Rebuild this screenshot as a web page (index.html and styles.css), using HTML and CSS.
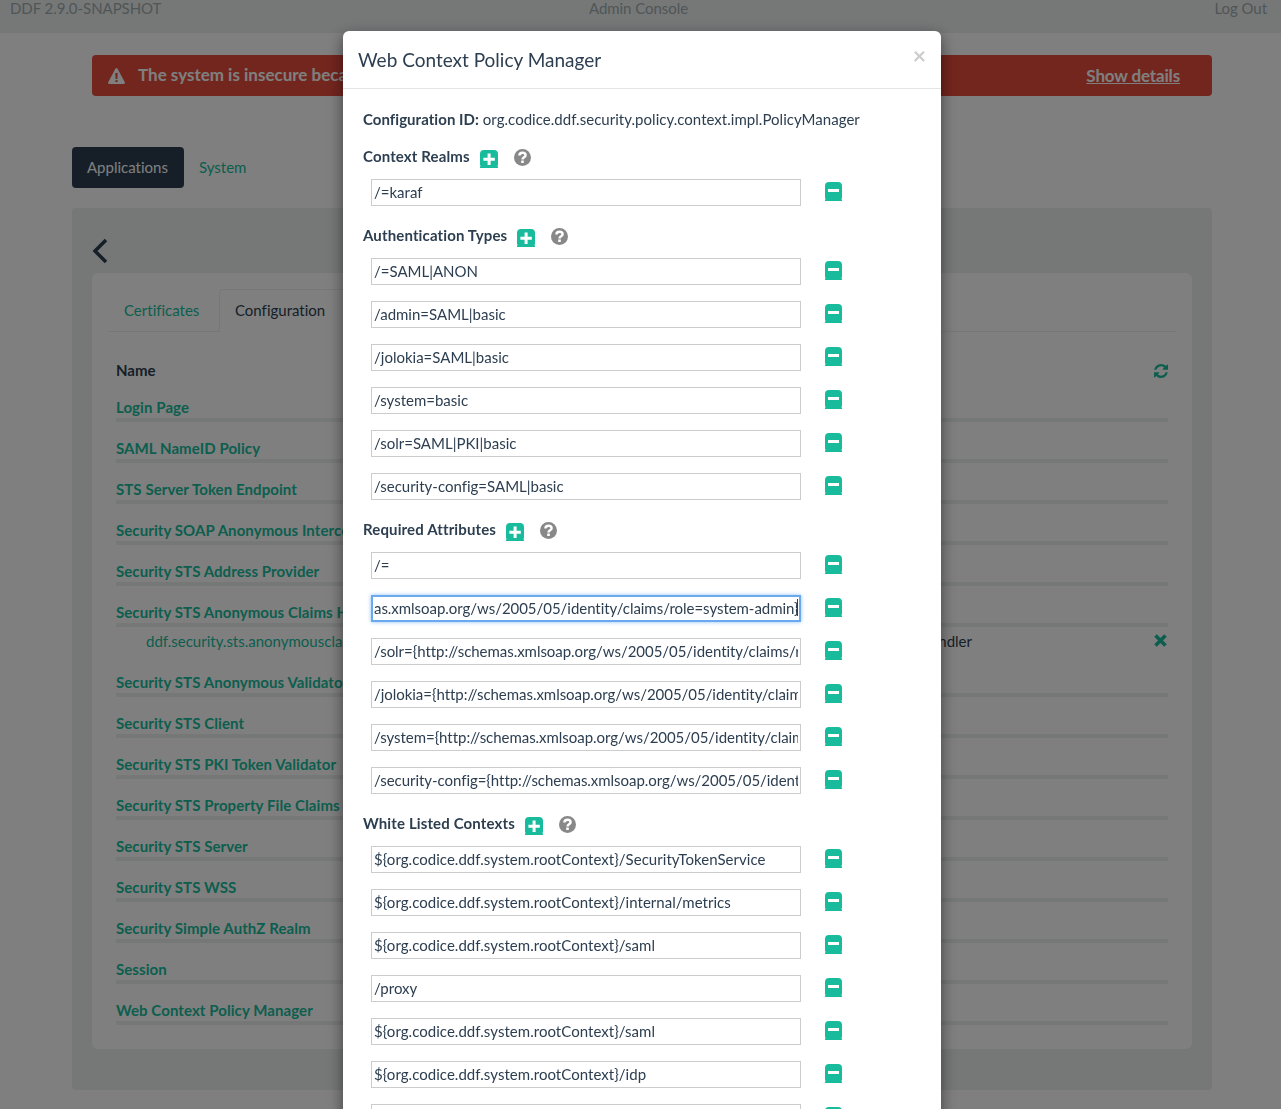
FILE: index.html
```html
<!DOCTYPE html>
<html lang="en">
<head>
  <meta charset="UTF-8">
  <title>Admin Console</title>
  <link rel="stylesheet" href="styles.css">
</head>
<body>

  <svg class="sprites" aria-hidden="true">
    <symbol id="btn-plus" viewBox="0 0 18 18">
      <path fill="#18bc9c" d="M4 0h10a4 4 0 0 1 4 4v11l-.7 1 .7.7V18H0v-1.300l.7-.7-.7-1V4a4 4 0 0 1 4-4z"/>
      <path fill="#fff" d="M7.600 3.500h3v4.300h4.200v3h-4.200v4.200h-3v-4.200H3.400v-3h4.200z"/>
    </symbol>
    <symbol id="btn-minus" viewBox="0 0 17 19">
      <path fill="#18bc9c" d="M4 0h9a4 4 0 0 1 4 4v12l-.7 1 .7.7V19H0v-1.300l.7-.7-.7-1V4a4 4 0 0 1 4-4z"/>
      <rect fill="#fff" x="3" y="7" width="11" height="3"/>
    </symbol>
    <symbol id="btn-help" viewBox="0 0 17 17">
      <circle cx="8.500" cy="8.500" r="8.500" fill="#888"/>
      <path fill="none" stroke="#fff" stroke-width="2.400" d="M5.400 6.400c0-1.800 1.400-2.700 3.100-2.700s3.100.9 3.100 2.500c0 2.200-3.100 2.100-3.100 4.300"/>
      <rect fill="#fff" x="7.200" y="11.500" width="2.600" height="2.500"/>
    </symbol>
  </svg>

  <header class="topbar">
    <span>DDF 2.9.0-SNAPSHOT</span>
    <span class="topbar-mid">Admin Console</span>
    <span class="topbar-end">Log Out</span>
  </header>

  <main class="page">
    <div class="alert">
      <svg class="alert-icon" viewBox="0 0 17 16"><path fill="#fff" fill-rule="evenodd" d="M8.500 0c.5 0 .9.300 1.100.7l7.200 13.500c.4.800-.1 1.800-1.100 1.800H1.300c-1 0-1.500-1-1.100-1.800L7.400.7C7.600.3 8 0 8.500 0zM7.300 5l.3 6h1.800l.3-6zm0 7.200V14h2.400v-1.800z"/></svg>
      <span class="alert-text">The system is insecure because default configuration values are in use.</span>
      <a class="alert-link">Show details</a>
    </div>

    <nav class="pills">
      <a class="pill pill-active">Applications</a>
      <a class="pill">System</a>
    </nav>

    <section class="panel">
      <div class="panel-head">
        <svg class="back" viewBox="0 0 16 26"><path fill="none" stroke="#2c3e50" stroke-width="3.500" d="M14 2L3 13l11 11"/></svg>
      </div>
      <div class="card">
        <ul class="tabs">
          <li class="tab">Certificates</li>
          <li class="tab tab-active">Configuration</li>
        </ul>
        <div class="config-list">
          <div class="config-head">
            <span>Name</span>
            <svg class="refresh" viewBox="0 0 1536 1536"><path fill="#18bc9c" d="M1511 928q0 5-1 7-64 268-268 434.500t-478 166.500q-146 0-282.500-55t-243.500-157l-129 129q-19 19-45 19t-45-19-19-45v-448q0-26 19-45t45-19h448q26 0 45 19t19 45-19 45l-137 137q71 66 161 102t187 36q134 0 250-65t186-179q11-17 53-117 8-23 30-23h192q13 0 22.500 9.500t9.500 22.500zm25-800v448q0 26-19 45t-45 19h-448q-26 0-45-19t-19-45 19-45l138-138q-148-137-349-137-134 0-250 65t-186 179q-11 17-53 117-8 23-30 23h-199q-13 0-22.500-9.500t-9.500-22.500v-7q65-268 270-434.500t480-166.500q146 0 284 55.500t245 156.500l130-129q19-19 45-19t45 19 19 45z"/></svg>
          </div>
          <div class="config-row">Login Page</div>
          <div class="config-row">SAML NameID Policy</div>
          <div class="config-row">STS Server Token Endpoint</div>
          <div class="config-row">Security SOAP Anonymous Interceptor</div>
          <div class="config-row">Security STS Address Provider</div>
          <div class="config-row">Security STS Anonymous Claims Handler</div>
          <div class="config-detail">
            <span class="detail-id">ddf.security.sts.anonymousclaimshandler</span>
            <span class="detail-name">Security STS Anonymous Claims Handler</span>
            <svg class="remove" viewBox="0 0 13 13"><path fill="none" stroke="#18bc9c" stroke-width="3.600" d="M1.500 1.500l10 10m0-10l-10 10"/></svg>
          </div>
          <div class="config-row">Security STS Anonymous Validator</div>
          <div class="config-row">Security STS Client</div>
          <div class="config-row">Security STS PKI Token Validator</div>
          <div class="config-row">Security STS Property File Claims Handler</div>
          <div class="config-row">Security STS Server</div>
          <div class="config-row">Security STS WSS</div>
          <div class="config-row">Security Simple AuthZ Realm</div>
          <div class="config-row">Session</div>
          <div class="config-row">Web Context Policy Manager</div>
        </div>
      </div>
    </section>
  </main>

  <div class="backdrop"></div>

  <div class="modal">
    <div class="modal-header">
      <h4 class="modal-title">Web Context Policy Manager</h4>
      <span class="close">×</span>
    </div>
    <div class="modal-body">
      <p class="config-id"><b>Configuration ID:</b> org.codice.ddf.security.policy.context.impl.PolicyManager</p>

      <div class="field-head">
        <b>Context Realms</b>
        <svg class="icon-plus"><use href="#btn-plus"/></svg>
        <svg class="icon-help"><use href="#btn-help"/></svg>
      </div>
      <div class="field"><input type="text" value="/=karaf" readonly><svg class="icon-minus"><use href="#btn-minus"/></svg></div>

      <div class="field-head">
        <b>Authentication Types</b>
        <svg class="icon-plus"><use href="#btn-plus"/></svg>
        <svg class="icon-help"><use href="#btn-help"/></svg>
      </div>
      <div class="field"><input type="text" value="/=SAML|ANON" readonly><svg class="icon-minus"><use href="#btn-minus"/></svg></div>
      <div class="field"><input type="text" value="/admin=SAML|basic" readonly><svg class="icon-minus"><use href="#btn-minus"/></svg></div>
      <div class="field"><input type="text" value="/jolokia=SAML|basic" readonly><svg class="icon-minus"><use href="#btn-minus"/></svg></div>
      <div class="field"><input type="text" value="/system=basic" readonly><svg class="icon-minus"><use href="#btn-minus"/></svg></div>
      <div class="field"><input type="text" value="/solr=SAML|PKI|basic" readonly><svg class="icon-minus"><use href="#btn-minus"/></svg></div>
      <div class="field"><input type="text" value="/security-config=SAML|basic" readonly><svg class="icon-minus"><use href="#btn-minus"/></svg></div>

      <div class="field-head">
        <b>Required Attributes</b>
        <svg class="icon-plus"><use href="#btn-plus"/></svg>
        <svg class="icon-help"><use href="#btn-help"/></svg>
      </div>
      <div class="field"><input type="text" value="/=" readonly><svg class="icon-minus"><use href="#btn-minus"/></svg></div>
      <div class="field"><input class="tight focused" type="text" value="as.xmlsoap.org/ws/2005/05/identity/claims/role=system-admin}" readonly><span class="caret"></span><svg class="icon-minus"><use href="#btn-minus"/></svg></div>
      <div class="field"><input class="tight" type="text" value="/solr={http://schemas.xmlsoap.org/ws/2005/05/identity/claims/role=system-admin}" readonly><svg class="icon-minus"><use href="#btn-minus"/></svg></div>
      <div class="field"><input class="tight" type="text" value="/jolokia={http://schemas.xmlsoap.org/ws/2005/05/identity/claims/role=system-admin}" readonly><svg class="icon-minus"><use href="#btn-minus"/></svg></div>
      <div class="field"><input class="tight" type="text" value="/system={http://schemas.xmlsoap.org/ws/2005/05/identity/claims/role=system-admin}" readonly><svg class="icon-minus"><use href="#btn-minus"/></svg></div>
      <div class="field"><input class="tight" type="text" value="/security-config={http://schemas.xmlsoap.org/ws/2005/05/identity/claims/role=system-admin}" readonly><svg class="icon-minus"><use href="#btn-minus"/></svg></div>

      <div class="field-head">
        <b>White Listed Contexts</b>
        <svg class="icon-plus"><use href="#btn-plus"/></svg>
        <svg class="icon-help"><use href="#btn-help"/></svg>
      </div>
      <div class="field"><input class="wide" type="text" value="${org.codice.ddf.system.rootContext}/SecurityTokenService" readonly><svg class="icon-minus"><use href="#btn-minus"/></svg></div>
      <div class="field"><input class="wide" type="text" value="${org.codice.ddf.system.rootContext}/internal/metrics" readonly><svg class="icon-minus"><use href="#btn-minus"/></svg></div>
      <div class="field"><input class="wide" type="text" value="${org.codice.ddf.system.rootContext}/saml" readonly><svg class="icon-minus"><use href="#btn-minus"/></svg></div>
      <div class="field"><input type="text" value="/proxy" readonly><svg class="icon-minus"><use href="#btn-minus"/></svg></div>
      <div class="field"><input class="wide" type="text" value="${org.codice.ddf.system.rootContext}/saml" readonly><svg class="icon-minus"><use href="#btn-minus"/></svg></div>
      <div class="field"><input class="wide" type="text" value="${org.codice.ddf.system.rootContext}/idp" readonly><svg class="icon-minus"><use href="#btn-minus"/></svg></div>
      <div class="field"><input type="text" value="" readonly><svg class="icon-minus"><use href="#btn-minus"/></svg></div>
    </div>
  </div>

</body>
</html>
```

FILE: styles.css
```css
html, body {
  height: 100%;
  overflow: hidden;
}
body {
  margin: 0;
  background: #fff;
  color: #2c3e50;
  font-family: Lato, "Liberation Sans", sans-serif;
  font-size: 15px;
  line-height: 21px;
  font-variant-ligatures: none;
}
.sprites {
  display: none;
}

/* top bar */
.topbar {
  display: grid;
  grid-template-columns: 1fr auto 1fr;
  height: 33px;
  padding: 0 14px 0 10px;
  background: #ecf0f1;
  color: #a0acad;
  line-height: 17px;
  letter-spacing: -.05px;
}
.topbar-end {
  text-align: right;
}

/* page behind the dialog */
.page {
  padding: 22px 69px 0 72px;
}
.alert {
  display: flex;
  align-items: center;
  height: 41px;
  margin-left: 20px;
  padding: 0 32px 0 16px;
  border-radius: 4px;
  background: #e74c3c;
  color: #fff;
  font-size: 17px;
  font-weight: 700;
  white-space: nowrap;
}
.alert-icon {
  width: 17px;
  height: 16px;
  margin-right: 13px;
}
.alert-text {
  flex: 1;
  padding-bottom: 2px;
}
.alert-link {
  text-decoration: underline;
  letter-spacing: -.15px;
}
.pills {
  display: flex;
  margin: 51px 0 20px;
}
.pill {
  padding: 10px 15px;
  border-radius: 4px;
  color: #18bc9c;
}
.pill-active {
  width: 112px;
  box-sizing: border-box;
  background: #2c3e50;
  color: #fff;
}
.panel {
  height: 882px;
  padding: 0 20px;
  border-radius: 4px;
  background: #ecf0f1;
}
.panel-head {
  height: 65px;
  padding-top: 30px;
  box-sizing: border-box;
}
.back {
  display: block;
  width: 16px;
  height: 26px;
}
.card {
  height: 776px;
  padding: 16px;
  box-sizing: border-box;
  border-radius: 6px;
  background: #fff;
}
.tabs {
  display: flex;
  height: 42px;
  margin: 0;
  padding: 0 0 0 1px;
  list-style: none;
  border-bottom: 1px solid #ecf0f1;
}
.tab {
  width: 110px;
  box-sizing: border-box;
  padding: 11px 15px 10px;
  color: #18bc9c;
}
.tab-active {
  width: 200px;
  height: 43px;
  padding-top: 10px;
  border: 1px solid #ecf0f1;
  border-bottom: 0;
  border-radius: 4px 4px 0 0;
  background: #fff;
  color: #2c3e50;
}
.config-list {
  padding: 28px 8px 0;
}
.config-head {
  display: flex;
  justify-content: space-between;
  align-items: center;
  font-weight: 700;
}
.refresh {
  width: 14px;
  height: 14px;
}
.config-row {
  padding-top: 16px;
  border-bottom: 4px solid #ecf0f1;
  color: #18bc9c;
  font-weight: 700;
  letter-spacing: .08px;
  white-space: nowrap;
}
.config-detail {
  display: flex;
  align-items: center;
  padding: 4px 0;
  white-space: nowrap;
}
.detail-id {
  flex: 1;
  padding-left: 30px;
  color: #18bc9c;
}
.detail-name {
  margin-right: 182px;
}
.remove {
  width: 13px;
  height: 13px;
  margin: -2px 1px 0 0;
}

.backdrop {
  position: fixed;
  inset: 0;
  background: rgba(0, 0, 0, .5);
}

/* dialog */
.modal {
  position: fixed;
  top: 31px;
  left: 343px;
  width: 598px;
  border-radius: 6px 6px 0 0;
  background: #fff;
  box-shadow: 0 5px 15px rgba(0, 0, 0, .5);
}
.modal-header {
  display: flex;
  justify-content: space-between;
  padding: 15px;
  border-bottom: 1px solid #e5e5e5;
}
.modal-title {
  margin: 0;
  font-size: 19px;
  font-weight: 400;
  line-height: 27px;
}
.close {
  margin: -4px 0 0;
  color: #ccc;
  font-size: 23px;
  font-weight: 700;
  line-height: 27px;
}
.modal-body {
  padding: 20px;
}
.config-id {
  margin: 0;
  letter-spacing: .03px;
}
.config-id b {
  letter-spacing: .05px;
}
.field-head b {
  letter-spacing: .13px;
}
.field-head {
  display: flex;
  align-items: center;
  height: 21px;
  margin: 19px 0 12px;
}
.config-id + .field-head {
  margin-top: 16px;
}
.field {
  display: flex;
  align-items: flex-start;
  position: relative;
  margin: 0 0 16px 8px;
}
.field input {
  width: 430px;
  height: 27px;
  box-sizing: border-box;
  padding: 0 2px 2px;
  border: 1px solid #ccc;
  outline: 0;
  color: #2c3e50;
  font: 15px Lato, "Liberation Sans", sans-serif;
  font-variant-ligatures: none;
}
.field input.tight {
  letter-spacing: -.04px;
}
.field input.wide {
  letter-spacing: .04px;
}
.field input.focused {
  border: 2px solid #6aa9ee;
  padding: 0 1px 2px;
  box-shadow: 0 0 4px #8ec0f5;
}
.caret {
  position: absolute;
  left: 426px;
  top: 4px;
  width: 1px;
  height: 17px;
  background: #2c3e50;
}
.icon-plus {
  width: 18px;
  height: 18px;
  margin: 5px 16px 0 10px;
}
.icon-help {
  width: 17px;
  height: 17px;
  margin-top: 1px;
}
.icon-minus {
  width: 17px;
  height: 19px;
  margin: 3px 0 0 24px;
}
```
